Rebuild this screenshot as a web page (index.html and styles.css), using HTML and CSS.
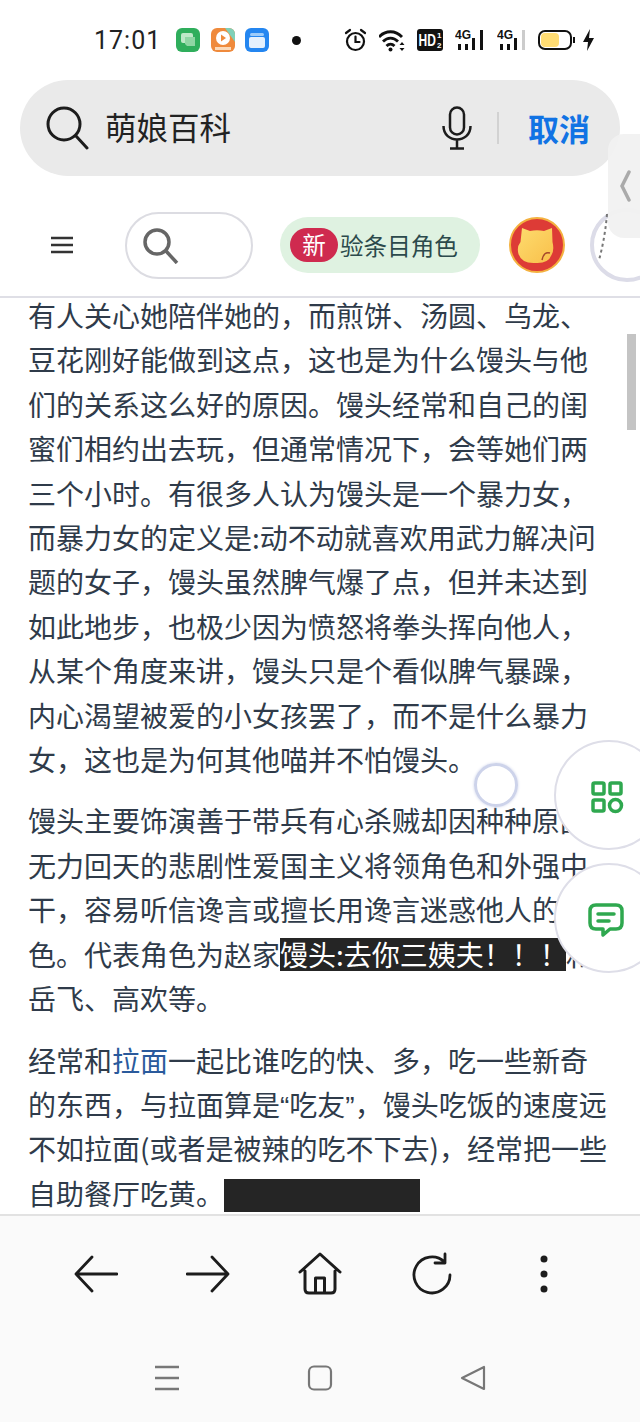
FILE: index.html
```html
<!DOCTYPE html>
<html lang="zh-CN">
<head>
  <meta charset="UTF-8" />
  <title>萌娘百科</title>
  <meta name="viewport" content="width=device-width, initial-scale=1" />
  <link rel="stylesheet" href="styles.css">
</head>
<body>
  <div class="status-bar">
    <span class="time">17:01</span>
    <div class="status-apps">
      <svg width="24" height="24" viewBox="0 0 24 24"><rect width="24" height="24" rx="6" fill="#2fae5c"/><rect x="5" y="5" width="12" height="10" rx="2" fill="#bfe8c8"/><path d="M9 9h10v9h-8l-2-2z" fill="#8fd6a4"/></svg>
      <svg width="24" height="24" viewBox="0 0 24 24"><rect width="24" height="24" rx="6" fill="#ef8a3c"/><path d="M14 0h4a6 6 0 0 1 6 6v8z" fill="#7fd0b8"/><circle cx="12" cy="10" r="7" fill="#fff"/><path d="M10 6.500l5 3.500-5 3.500z" fill="#ef8a3c"/><rect x="4" y="19" width="16" height="3" fill="#fbd9b8"/></svg>
      <svg width="24" height="24" viewBox="0 0 24 24"><rect width="24" height="24" rx="6" fill="#2486f0"/><rect x="5" y="5" width="14" height="3" rx="1.500" fill="#9ccbfa"/><rect x="4" y="9" width="16" height="11" rx="2" fill="#e4f0fd"/></svg>
    </div>
    <span class="status-dot"></span>
    <div class="status-icons">
      <svg width="23" height="24" viewBox="0 0 23 24" fill="none" stroke="#111" stroke-width="2.200"><circle cx="11.500" cy="13.500" r="8.500"/><path d="M11.500 8.500v5.500h4M2 5l4-3M21 5l-4-3" stroke-linecap="round"/></svg>
      <svg width="26" height="24" viewBox="0 0 26 24" fill="none" stroke="#111" stroke-width="2.800"><path d="M0 9c6.500-7 16.500-7 23 0M4 13.500c4.500-4.500 10.500-4.500 15 0M7.500 18c2.500-2.500 5.500-2.500 8 0"/><circle cx="11.500" cy="21.500" r="2" fill="#111" stroke="none"/><path d="M23 14l-2.500 3h5zM23 23l-2.500-3h5z" fill="#111" stroke="none"/></svg>
      <svg width="26" height="24" viewBox="0 0 26 24"><rect y="1" width="26" height="22" rx="3" fill="#111"/><text x="2" y="18" class="hd-text" transform="scale(.75 1)">HD</text><text x="20" y="10" class="hd-small">1</text><text x="20" y="20" class="hd-small">2</text></svg>
      <svg width="30" height="24" viewBox="0 0 30 24"><text x="0" y="11" class="net-text">4G</text><rect x="3" y="16" width="3" height="6" fill="#111"/><rect x="10" y="16" width="3" height="6" fill="#111"/><rect x="17" y="10" width="3" height="12" fill="#111"/><rect x="25" y="2" width="3" height="20" fill="#111"/></svg>
      <svg width="29" height="24" viewBox="0 0 29 24"><text x="0" y="11" class="net-text">4G</text><rect x="3" y="16" width="3" height="6" fill="#111"/><rect x="10" y="16" width="3" height="6" fill="#111"/><rect x="17" y="10" width="3" height="12" fill="#111"/><rect x="25" y="2" width="3" height="20" fill="#ccc"/></svg>
      <svg width="38" height="24" viewBox="0 0 38 24"><rect x="1" y="3" width="32" height="18" rx="6" fill="#fff" stroke="#111" stroke-width="2"/><rect x="3" y="5" width="18" height="14" rx="4" fill="#ffdc73"/><rect x="35" y="9" width="2" height="6" fill="#111"/></svg>
      <svg class="bolt" width="13" height="24" viewBox="0 0 13 24"><path d="M8 1L1 14h5l-1 9 7-13H7z" fill="#111"/></svg>
    </div>
  </div>

  <div class="search-pill">
    <svg width="44" height="44" viewBox="0 0 44 44" fill="none" stroke="#1c1c1c" stroke-width="3"><circle cx="18" cy="18" r="16"/><path d="M30 30l11 12" stroke-linecap="round"/></svg>
    <span class="search-query">萌娘百科</span>
    <svg class="mic" width="30" height="44" viewBox="0 0 30 44" fill="none" stroke="#1c1c1c" stroke-width="2.500"><rect x="8" y="1.500" width="14" height="27" rx="7"/><path d="M1.500 20c0 18 27 18 27 0M15 34v8M8 42.500h14"/></svg>
    <span class="search-divider"></span>
    <span class="search-cancel">取消</span>
  </div>

  <div class="toolbar">
    <svg class="menu-icon" width="22" height="18" viewBox="0 0 22 18" stroke="#333" stroke-width="2.500"><path d="M0 2h22M0 9h22M0 16h22"/></svg>
    <div class="mini-search">
      <svg width="36" height="36" viewBox="0 0 36 36" fill="none" stroke="#666" stroke-width="3.500"><circle cx="14" cy="14" r="12"/><path d="M23 23l11 12"/></svg>
    </div>
    <div class="new-pill">
      <span class="new-badge">新</span>
      <span>验条目角色</span>
    </div>
    <svg class="cat-avatar" width="56" height="56" viewBox="0 0 56 56">
      <defs><linearGradient id="cat-fill" x1="0" y1="0" x2="1" y2="1"><stop offset="0" stop-color="#fddc6e"/><stop offset="1" stop-color="#f9bf4a"/></linearGradient></defs>
      <circle cx="28" cy="28" r="27" fill="#dd3b36" stroke="#f4b13f" stroke-width="2"/>
      <path d="M13 11l8 3q7-1.500 14 0l8-3 .5 14q2 8-1 13-3 8-14 8h-4q-12 0-15-9-2-7 2-12z" fill="url(#cat-fill)"/>
      <path d="M33 43q2-9 8-7" fill="none" stroke="#a5462a" stroke-width="1.500"/>
    </svg>
    <svg class="ring" width="74" height="74" viewBox="0 0 74 74" fill="none"><circle cx="37" cy="37" r="35" stroke="#dcdce8" stroke-width="4"/><path d="M17 6Q15 30 9 52" stroke="#777" stroke-width="2" stroke-dasharray="3 3"/></svg>
  </div>

  <div class="content">
    <p>有人关心她陪伴她的，而煎饼、汤圆、乌龙、<br>豆花刚好能做到这点，这也是为什么馒头与他<br>们的关系这么好的原因。馒头经常和自己的闺<br>蜜们相约出去玩，但通常情况下，会等她们两<br>三个小时。有很多人认为馒头是一个暴力女，<br>而暴力女的定义是:动不动就喜欢用武力解决问<br>题的女子，馒头虽然脾气爆了点，但并未达到<br>如此地步，也极少因为愤怒将拳头挥向他人，<br>从某个角度来讲，馒头只是个看似脾气暴躁，<br>内心渴望被爱的小女孩罢了，而不是什么暴力<br>女，这也是为何其他喵并不怕馒头。</p>
    <p>馒头主要饰演善于带兵有心杀贼却因种种原因<br>无力回天的悲剧性爱国主义将领角色和外强中<br>干，容易听信谗言或擅长用谗言迷惑他人的角<br>色。代表角色为赵家<span class="heimu">馒头:去你三姨夫！！！</span>和<br>岳飞、高欢等。</p>
    <p>经常和<a class="wiki-link">拉面</a>一起比谁吃的快、多，吃一些新奇<br>的东西，与拉面算是<span class="narrow-quote">“</span>吃友<span class="narrow-quote">”</span>，馒头吃饭的速度远<br>不如拉面(或者是被辣的吃不下去)，经常把一些<br>自助餐厅吃黄。<span class="heimu heimu-blank"></span></p>
  </div>

  <div class="browser-bar">
    <div class="browser-tools">
      <svg width="44" height="44" viewBox="0 0 44 44" fill="none" stroke="#1c1c1c" stroke-width="2.800" stroke-linecap="round" stroke-linejoin="round"><path d="M43 22H2M18 5L2 22l16 17"/></svg>
      <svg width="44" height="44" viewBox="0 0 44 44" fill="none" stroke="#1c1c1c" stroke-width="2.800" stroke-linecap="round" stroke-linejoin="round"><path d="M1 22h41M26 5l16 17-16 17"/></svg>
      <svg width="44" height="44" viewBox="0 0 44 44" fill="none" stroke="#1c1c1c" stroke-width="3" stroke-linejoin="round" stroke-linecap="round"><path d="M2 20L22 2l20 18M7 19v18q0 4 4 4h22q4 0 4-4V19M17.500 41V26h9v15"/></svg>
      <svg width="44" height="44" viewBox="0 0 44 44" fill="none" stroke="#1c1c1c" stroke-width="2.800" stroke-linecap="round" stroke-linejoin="round"><path d="M34.500 10A18 18 0 1 0 40 23M35 2v9H25"/></svg>
      <svg width="44" height="44" viewBox="0 0 44 44" fill="#1c1c1c"><circle cx="22" cy="7" r="3.500"/><circle cx="22" cy="22" r="3.500"/><circle cx="22" cy="37" r="3.500"/></svg>
    </div>
    <div class="nav-keys">
      <svg width="26" height="26" viewBox="0 0 26 26" stroke="#777" stroke-width="2.500"><path d="M1 2h24M1 13h24M1 24h24"/></svg>
      <svg width="26" height="26" viewBox="0 0 26 26" fill="none" stroke="#777" stroke-width="2.200"><rect x="2" y="1.500" width="22" height="23" rx="5"/></svg>
      <svg width="26" height="26" viewBox="0 0 26 26" fill="none" stroke="#777" stroke-width="2.200" stroke-linejoin="round"><path d="M2 13L24 2v22z"/></svg>
    </div>
  </div>

  <!-- things floating over the page -->
  <div class="side-tab"><svg width="12" height="32" viewBox="0 0 12 32" fill="none" stroke="#aaa" stroke-width="3.500" stroke-linecap="round"><path d="M10 2L3 16l7 14"/></svg></div>
  <div class="scroll-thumb"></div>
  <div class="touch-dot"></div>
  <div class="float-btn float-grid">
    <svg width="34" height="34" viewBox="0 0 34 34" fill="none" stroke="#2fa84f" stroke-width="3.500"><rect x="3" y="3" width="11" height="11" rx="1.500"/><rect x="20" y="3" width="11" height="11" rx="1.500"/><rect x="3" y="20" width="11" height="11" rx="1.500"/><circle cx="25.500" cy="25.500" r="6"/></svg>
  </div>
  <div class="float-btn float-chat">
    <svg width="36" height="36" viewBox="0 0 36 36" fill="none" stroke="#2fa84f" stroke-width="3.500" stroke-linejoin="round"><path d="M8 3h20q6 0 6 6v12q0 6-6 6h-6l-7 6v-6H8q-6 0-6-6V9q0-6 6-6z"/><path d="M10 12h16M10 19h11" stroke-linecap="round"/></svg>
  </div>
</body>
</html>
```

FILE: styles.css
```css
* {
  box-sizing: border-box;
}

html, body {
  margin: 0;
  height: 1422px;
  overflow: hidden;
}

body {
  display: flex;
  flex-direction: column;
  position: relative;
  background-color: #fff;
  font-family: "Noto Sans CJK SC", "Noto Sans", sans-serif;
  color: #1c1c1c;
}

svg {
  display: block;
  flex: none;
}

/* status bar */
.status-bar {
  display: flex;
  align-items: center;
  height: 80px;
  padding-left: 94px;
  flex: none;
}

.time {
  width: 64px;
  font-family: Roboto, sans-serif;
  font-size: 25px;
  letter-spacing: 1px;
  color: #222;
}

.status-apps {
  display: flex;
  gap: 10.5px;
  margin-left: 18px;
}

.status-dot {
  width: 9px;
  height: 9px;
  margin-left: 23px;
  border-radius: 50%;
  background-color: #111;
}

.status-icons {
  display: flex;
  align-items: center;
  gap: 12px;
  margin-left: 43px;
}

.bolt {
  margin-left: -6px;
}

.hd-text {
  font-family: "Liberation Sans", sans-serif;
  font-size: 16px;
  font-weight: 700;
  fill: #fff;
}

.hd-small {
  font-family: "Liberation Sans", sans-serif;
  font-size: 8px;
  font-weight: 700;
  fill: #fff;
}

.net-text {
  font-family: "Liberation Sans", sans-serif;
  font-size: 12px;
  font-weight: 700;
  fill: #111;
}

/* search */
.search-pill {
  display: flex;
  align-items: center;
  flex: none;
  height: 96px;
  margin: 0 20px;
  padding-left: 26px;
  border-radius: 48px;
  background-color: #eaeaea;
}

.search-query {
  margin: -4px 0 0 15px;
  font-size: 31.500px;
  color: #222;
}

.mic {
  margin-left: auto;
}

.search-divider {
  width: 2px;
  height: 32px;
  margin-left: 25px;
  background-color: #d2d2d2;
}

.search-cancel {
  margin: -2px 30px 0 29px;
  font-size: 31px;
  font-weight: 700;
  color: #1173e4;
}

/* site toolbar */
.toolbar {
  display: flex;
  align-items: center;
  flex: none;
  position: relative;
  z-index: 1;
  height: 122px;
  padding: 18px 0 0 51px;
  overflow: hidden;
  background-color: #fff;
  border-bottom: 2px solid #dfdfe6;
}

.mini-search {
  flex: none;
  width: 128px;
  height: 67px;
  margin-left: 52px;
  padding: 14px 0 0 16px;
  border: 2px solid #dcdce2;
  border-radius: 34px;
}

.new-pill {
  flex: none;
  display: flex;
  align-items: center;
  width: 200px;
  height: 56px;
  margin-left: 27px;
  padding-left: 10px;
  border-radius: 28px;
  background-color: #dff2e1;
  font-size: 23.600px;
  color: #2c4a4c;
}

.new-badge {
  width: 48px;
  height: 34px;
  margin-right: 2px;
  border-radius: 17px;
  background-color: #cf2a4f;
  color: #fff;
  text-align: center;
  line-height: 32px;
}

.cat-avatar {
  margin-left: 29px;
}

.ring {
  margin-left: 25px;
}

/* article */
.content {
  flex: 1;
  min-height: 0;
  padding: 0 28px;
  font-size: 28px;
  line-height: 44.400px;
  color: #2f3b4a;
  white-space: nowrap;
}

.content p {
  margin: 0 0 17px;
}

.content p:first-child {
  margin-top: -5px;
}

.narrow-quote {
  font-family: "Liberation Sans", sans-serif;
  line-height: 1;
}

.wiki-link {
  color: #2a5a9c;
}

.heimu {
  display: inline-block;
  width: 286px;
  height: 33px;
  line-height: 33px;
  background-color: #252525;
  color: #fff;
}

.heimu-blank {
  width: 196px;
  vertical-align: -7px;
}

/* browser chrome */
.browser-bar {
  flex: none;
  position: relative;
  z-index: 1;
  height: 208px;
  border-top: 2px solid #e2e2e2;
  background-color: #fafafa;
}

.browser-tools {
  display: flex;
  justify-content: space-between;
  padding: 36px 74px 0;
}

.nav-keys {
  display: flex;
  justify-content: space-between;
  padding: 69px 154px 0;
}

/* floating */
.side-tab {
  position: absolute;
  z-index: 2;
  top: 134px;
  right: 0;
  display: flex;
  align-items: center;
  width: 32px;
  height: 104px;
  padding-left: 11px;
  border-radius: 16px 0 0 16px;
  background-color: rgba(241, 241, 241, 0.95);
}

.scroll-thumb {
  position: absolute;
  top: 334px;
  left: 627px;
  width: 9px;
  height: 96px;
  background-color: #c4c4c4;
}

.touch-dot {
  position: absolute;
  top: 763px;
  left: 474px;
  width: 44px;
  height: 44px;
  border: 3px solid #cdd3ea;
  border-radius: 50%;
  background-color: rgba(255, 255, 255, 0.6);
  box-shadow: 0 0 3px #cdd3ea;
}

.float-btn {
  position: absolute;
  left: 554px;
  display: flex;
  align-items: center;
  width: 110px;
  height: 110px;
  padding: 4px 0 0 34px;
  border: 2px solid #dedee8;
  border-radius: 55px;
  background-color: #fff;
}

.float-grid {
  top: 740px;
}

.float-chat {
  top: 863px;
  padding-left: 32px;
}
```
